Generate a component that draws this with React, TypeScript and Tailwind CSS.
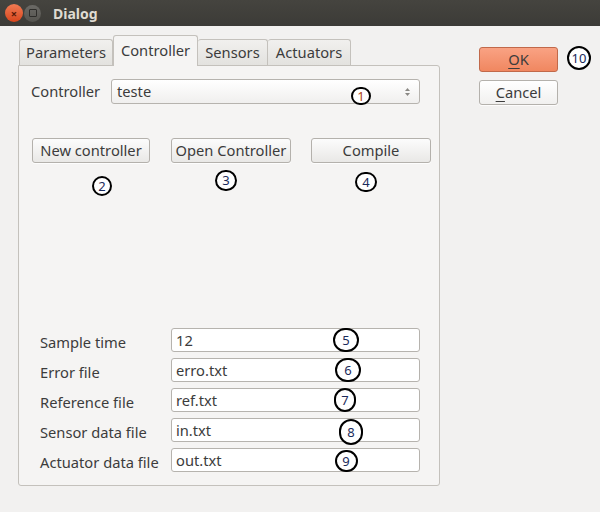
import React from "react";

const font = { fontFamily: '"Noto Sans", "DejaVu Sans", sans-serif' };

function Mark({ n, x, y, w = 20, h = 20, color = "#1a2a5a" }: { n: string; x: number; y: number; w?: number; h?: number; color?: string }) {
  return (
    <div
      className="absolute flex items-center justify-center rounded-full border-[2.5px] border-black bg-white text-[13px] leading-none"
      style={{ left: x - w / 2, top: y - h / 2, width: w, height: h, color }}
    >
      {n}
    </div>
  );
}

function Btn({ children, className = "" }: { children: React.ReactNode; className?: string }) {
  return (
    <div
      className={
        "flex h-[25px] items-center justify-center rounded-[3px] border border-[#b4b1ac] bg-gradient-to-b from-[#fcfcfc] to-[#e9e8e6] text-[14.7px] text-[#3c3c3c] shadow-[0_1px_0_rgba(255,255,255,0.8)] " +
        className
      }
    >
      {children}
    </div>
  );
}

function Field({ label, value }: { label: string; value: string }) {
  return (
    <div className="flex h-[24px] items-center">
      <div className="w-[131px] pt-[4px] text-[14.7px] text-[#3c3c3c]">{label}</div>
      <div className="flex h-[24px] w-[249px] items-center rounded-[3px] border border-[#b6b3ae] bg-white px-[4px] text-[14.7px] text-[#3c3c3c]">
        {value}
      </div>
    </div>
  );
}

export default function App() {
  return (
    <div className="relative h-[512px] w-[600px] overflow-hidden bg-[#f2f1f0]" style={font}>
      {/* title bar */}
      <div className="flex h-[26px] items-center bg-gradient-to-b from-[#45443f] to-[#3c3b37] pl-[5px]">
        <div className="flex h-[18px] w-[18px] items-center justify-center rounded-full bg-gradient-to-b from-[#f07a52] to-[#d9451a] text-[11px] font-bold leading-none text-[#5a1a08]">
          ×
        </div>
        <div className="ml-[1px] flex h-[17px] w-[17px] items-center justify-center rounded-full bg-gradient-to-b from-[#6b6a66] to-[#55544f]">
          <div className="h-[8px] w-[8px] rounded-[1px] border border-[#2e2d2a]" />
        </div>
        <div className="ml-[12px] text-[14px] font-bold text-[#dfdbd2]">Dialog</div>
      </div>

      <div className="flex pl-[18px]">
        {/* left tab widget */}
        <div className="flex w-[422px] flex-col pt-[9px]">
          <div className="flex items-end pl-[1px]">
            <div className="flex h-[26px] w-[94px] items-center justify-center rounded-t-[3px] border border-b-0 border-[#c4c1bc] bg-gradient-to-b from-[#f1f0ee] to-[#e3e2df] text-[14.7px] text-[#3c3c3c]">
              Parameters
            </div>
            <div className="relative z-10 mb-[-1px] flex h-[31px] w-[85px] items-center justify-center rounded-t-[3px] border border-b-0 border-[#c4c1bc] bg-[#f5f4f3] pb-[2px] text-[14.7px] text-[#3c3c3c]">
              Controller
            </div>
            <div className="flex h-[26px] w-[70px] items-center justify-center rounded-t-[3px] border border-b-0 border-l-0 border-[#c4c1bc] bg-gradient-to-b from-[#f1f0ee] to-[#e3e2df] text-[14.7px] text-[#3c3c3c]">
              Sensors
            </div>
            <div className="flex h-[26px] w-[83px] items-center justify-center rounded-t-[3px] border border-b-0 border-l-0 border-[#c4c1bc] bg-gradient-to-b from-[#f1f0ee] to-[#e3e2df] text-[14.7px] text-[#3c3c3c]">
              Actuators
            </div>
          </div>
          <div className="flex h-[421px] flex-col rounded-b-[3px] rounded-tr-[3px] border border-[#c4c1bc] bg-[#f5f4f3] pl-[12px] pt-[13px]">
            <div className="flex h-[25px] items-center">
              <div className="w-[80px] text-[14.7px] text-[#3c3c3c]">Controller</div>
              <div className="flex h-[25px] w-[309px] items-center justify-between rounded-[3px] border border-[#b6b3ae] bg-gradient-to-b from-[#ffffff] to-[#f0efee] pl-[5px] pr-[8px] text-[14.7px] text-[#3c3c3c]">
                <span>teste</span>
                <svg width="7" height="12" viewBox="0 0 7 12">
                  <path d="M3.5 2 L6 5 L1 5 Z" fill="#8a8884" />
                  <path d="M3.5 10 L6 7 L1 7 Z" fill="#8a8884" />
                </svg>
              </div>
            </div>
            <div className="mt-[34px] flex items-center pl-[1px]">
              <Btn className="w-[118px]">New controller</Btn>
              <Btn className="ml-[21px] w-[120px]">Open Controller</Btn>
              <Btn className="ml-[20px] w-[120px]">Compile</Btn>
            </div>
            <div className="mt-[165px] flex flex-col gap-[6px] pl-[9px]">
              <Field label="Sample time" value="12" />
              <Field label="Error file" value="erro.txt" />
              <Field label="Reference file" value="ref.txt" />
              <Field label="Sensor data file" value="in.txt" />
              <Field label="Actuator data file" value="out.txt" />
            </div>
          </div>
        </div>

        {/* right buttons */}
        <div className="ml-[39px] flex flex-col gap-[8px] pt-[21px]">
          <div className="flex h-[25px] w-[79px] items-center justify-center rounded-[3px] border border-[#c1694a] bg-gradient-to-b from-[#f9a283] to-[#f08760] text-[14.7px] text-[#3c3c3c]">
            <span className="underline decoration-1 underline-offset-[3px]">O</span>K
          </div>
          <Btn className="w-[79px] bg-gradient-to-b from-[#ffffff] to-[#f1f0ef]">
            <span className="underline decoration-1 underline-offset-[3px]">C</span>ancel
          </Btn>
        </div>
      </div>

      <Mark n="1" x={361} y={96} w={20} h={18} color="#b0441a" />
      <Mark n="2" x={102} y={186} w={20} h={20} />
      <Mark n="3" x={226} y={180} w={22} h={21} />
      <Mark n="4" x={366} y={182} w={22} h={20} />
      <Mark n="5" x={346} y={340} w={26} h={24} />
      <Mark n="6" x={348} y={370} w={26} h={24} />
      <Mark n="7" x={345} y={400} w={22} h={24} />
      <Mark n="8" x={351} y={432} w={24} h={26} />
      <Mark n="9" x={346} y={461} w={23} h={22} />
      <Mark n="10" x={579} y={58} w={24} h={24} />
    </div>
  );
}
